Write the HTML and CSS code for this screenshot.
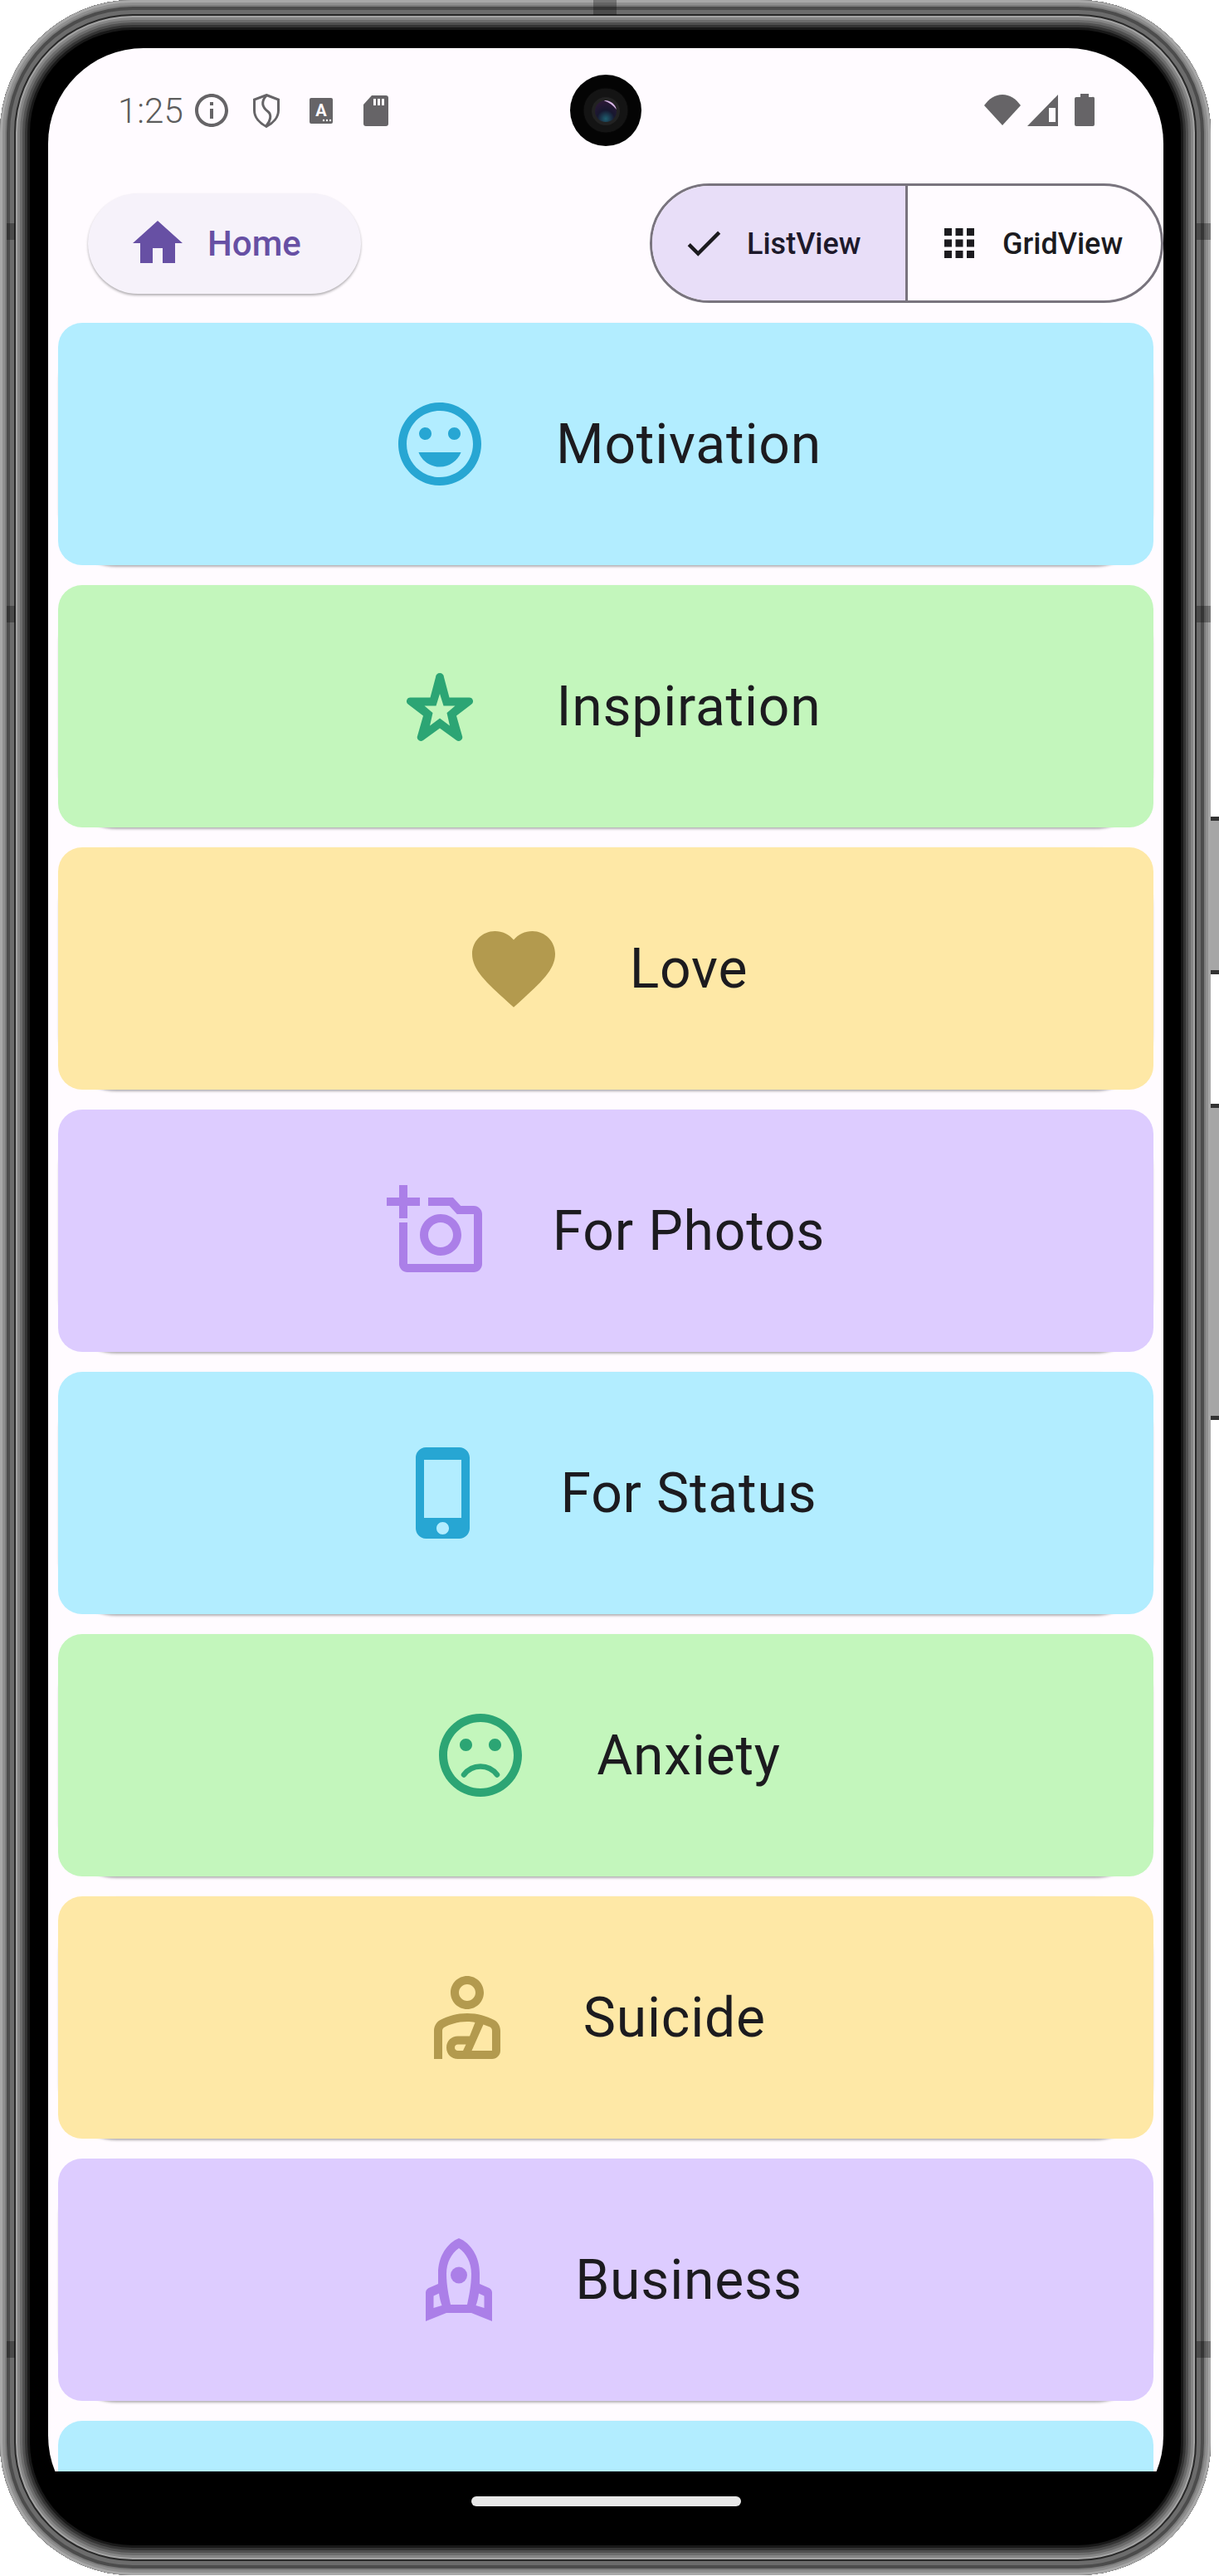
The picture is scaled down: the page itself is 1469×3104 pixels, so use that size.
FILE: index.html
```html
<!DOCTYPE html>
<html lang="en">
<head>
    <meta charset="UTF-8">
    <meta name="viewport" content="width=device-width, initial-scale=1.0">
    <title>Quotes</title>
    <link rel="stylesheet" href="styles.css">
</head>
<body>
    <div class="device">
        <div class="phone">
            <!-- antenna bands on the frame -->
            <div class="band band-left band-1"></div>
            <div class="band band-left band-2"></div>
            <div class="band band-left band-3"></div>
            <div class="band band-right band-1"></div>
            <div class="band band-right band-2"></div>
            <div class="band band-right band-3"></div>
            <div class="band band-top"></div>

            <div class="screen">
                <div class="content">
                    <!-- Status bar -->
                    <div class="status-bar">
                        <div class="status-left">
                            <span class="time">1:25</span>
                            <svg class="status-icon" viewBox="0 0 24 24"><path d="M11 7h2v2h-2zm0 4h2v6h-2zm1-9C6.48 2 2 6.48 2 12s4.48 10 10 10 10-4.48 10-10S17.52 2 12 2zm0 18c-4.41 0-8-3.59-8-8s3.59-8 8-8 8 3.59 8 8-3.59 8-8 8z"/></svg>
                            <svg class="status-icon" viewBox="0 0 48 48"><path class="status-line" d="M24 5.5 38.5 11v13C38.500 32.500 32 39.500 24 43.500 16 39.500 9.500 32.500 9.500 24V11Z"/><path class="status-line" d="M24 6C17 14 19 20 26 25.500 31 29.500 28.500 37.500 24 42.500"/></svg>
                            <svg class="status-icon" viewBox="0 0 48 48"><rect x="10" y="9" width="28" height="31" rx="2"/><text class="sim-letter" x="24" y="31" text-anchor="middle">A</text><circle class="sim-dot" cx="27" cy="36" r="1.200"/><circle class="sim-dot" cx="31" cy="36" r="1.200"/><circle class="sim-dot" cx="35" cy="36" r="1.200"/></svg>
                            <svg class="status-icon" viewBox="0 0 48 48"><path d="M19 6H36a3 3 0 0 1 3 3V40a3 3 0 0 1-3 3H12a3 3 0 0 1-3-3V17Z"/><rect class="sim-dot" x="21" y="10" width="3" height="8"/><rect class="sim-dot" x="26" y="10" width="3" height="8"/><rect class="sim-dot" x="31" y="10" width="3" height="8"/></svg>
                        </div>
                        <svg class="camera" viewBox="0 0 86 86">
                            <defs>
                                <radialGradient id="lens" cx="0.5" cy="0.85" r="0.8">
                                    <stop offset="0" stop-color="#1f5f70"/>
                                    <stop offset="0.5" stop-color="#17172f"/>
                                    <stop offset="1" stop-color="#2a1836"/>
                                </radialGradient>
                            </defs>
                            <circle cx="43" cy="43" r="43" fill="#040404"/>
                            <circle cx="43" cy="43" r="27" fill="#141414" stroke="#080808" stroke-width="1"/>
                            <circle cx="43" cy="44" r="17" fill="#222"/>
                            <circle cx="43" cy="44" r="13" fill="url(#lens)"/>
                            <path d="M41 31.200C48 30.400 55 36 55.800 42 52.500 37.500 47.500 33.500 41 31.200Z" fill="#d9b8e6"/>
                        </svg>
                        <div class="status-right">
                            <svg class="status-icon" viewBox="0 0 48 48"><path d="M2 18C8 10 15 5 24 5S40 10 46 18L24 42Z"/></svg>
                            <svg class="status-icon" viewBox="0 0 48 48"><path d="M43 5V43H6ZM32 21V38H40V21Z" fill-rule="evenodd"/></svg>
                            <svg class="status-icon battery" viewBox="0 0 48 48"><path d="M19 4H29V8H33A2 2 0 0 1 36 10V41A2 2 0 0 1 34 43H14A2 2 0 0 1 12 41V10A2 2 0 0 1 14 8H19Z"/></svg>
                        </div>
                    </div>

                    <!-- Header -->
                    <div class="header">
                        <button class="home-button">
                            <svg viewBox="0 0 24 24"><path d="M10 20v-6h4v6h5v-8h3L12 3 2 12h3v8z"/></svg>
                            <span>Home</span>
                        </button>
                        <div class="view-toggle">
                            <div class="segment selected">
                                <svg viewBox="0 0 24 24"><path d="M9 16.170 4.830 12l-1.420 1.410L9 19 21 7l-1.410-1.410z"/></svg>
                                <span>ListView</span>
                            </div>
                            <div class="segment">
                                <svg viewBox="0 0 24 24"><path d="M4 8h4V4H4v4zm6 12h4v-4h-4v4zm-6 0h4v-4H4v4zm0-6h4v-4H4v4zm6 0h4v-4h-4v4zm6-10v4h4V4h-4zm-6 4h4V4h-4v4zm6 6h4v-4h-4v4zm0 6h4v-4h-4v4z"/></svg>
                                <span>GridView</span>
                            </div>
                        </div>
                    </div>

                    <!-- Categories -->
                    <div class="card-list">
                        <div class="card blue">
                            <svg class="card-icon" viewBox="0 0 24 24"><path d="M11.990 2C6.470 2 2 6.480 2 12s4.470 10 9.990 10C17.520 22 22 17.520 22 12S17.520 2 11.990 2zM12 20c-4.420 0-8-3.580-8-8s3.580-8 8-8 8 3.580 8 8-3.580 8-8 8zm3.500-9c.830 0 1.500-.670 1.500-1.500S16.330 8 15.500 8 14 8.670 14 9.500s.670 1.500 1.500 1.500zm-7 0c.830 0 1.500-.670 1.500-1.500S9.330 8 8.500 8 7 8.670 7 9.500 7.670 11 8.500 11zm3.500 6.500c2.330 0 4.310-1.460 5.110-3.500H6.890c.800 2.040 2.780 3.500 5.110 3.500z"/></svg>
                            <span class="card-title">Motivation</span>
                        </div>
                        <div class="card green">
                            <svg class="card-icon" viewBox="0 0 24 24"><path fill-rule="evenodd" d="M11 5A1 1 0 0 1 13 5L14.300 9.900H19.100A.9.9 0 0 1 19.600 11.550L16 14.300 17.400 19.200A.9.9 0 0 1 16 20.200L12 17.300 8 20.200A.9.9 0 0 1 6.600 19.200L8 14.300 4.400 11.550A.9.9 0 0 1 4.900 9.900H9.700ZM12 9 11.100 11.900H8.300L10.300 13.600 9.600 16.700 12 14.900 14.400 16.700 13.700 13.600 15.700 11.900H12.900Z"/></svg>
                            <span class="card-title">Inspiration</span>
                        </div>
                        <div class="card yellow">
                            <svg class="card-icon" viewBox="0 0 24 24"><path d="M12 21.350l-1.450-1.320C5.400 15.360 2 12.280 2 8.500 2 5.420 4.420 3 7.500 3c1.740 0 3.410.810 4.500 2.090C13.090 3.810 14.760 3 16.500 3 19.580 3 22 5.420 22 8.500c0 3.780-3.400 6.860-8.550 11.540L12 21.350z"/></svg>
                            <span class="card-title">Love</span>
                        </div>
                        <div class="card purple">
                            <svg class="card-icon" viewBox="0 0 24 24"><path d="M21 6h-3.170L16 4h-6v2h5.120l1.830 2H21v12H5V10H3v10c0 1.100.900 2 2 2h16c1.100 0 2-.900 2-2V8c0-1.100-.900-2-2-2zM8 13c0 2.760 2.240 5 5 5s5-2.240 5-5-2.240-5-5-5-5 2.240-5 5zm5-3c1.650 0 3 1.350 3 3s-1.350 3-3 3-3-1.350-3-3 1.350-3 3-3zM5 6h3V4H5V1H3v3H0v2h3v3h2V6z"/></svg>
                            <span class="card-title">For Photos</span>
                        </div>
                        <div class="card blue">
                            <svg class="card-icon" viewBox="0 0 24 24"><path d="M15.500 1h-8C6.120 1 5 2.120 5 3.500v17C5 21.880 6.120 23 7.500 23h8c1.380 0 2.500-1.120 2.500-2.500v-17C18 2.120 16.880 1 15.500 1zm-4 21c-.830 0-1.500-.670-1.500-1.500s.670-1.500 1.500-1.500 1.500.670 1.500 1.500-.670 1.500-1.500 1.500zm4.500-4H7V4h9v14z"/></svg>
                            <span class="card-title">For Status</span>
                        </div>
                        <div class="card green">
                            <svg class="card-icon" viewBox="0 0 24 24"><path d="M15.500 11c.830 0 1.500-.670 1.500-1.500S16.330 8 15.500 8 14 8.670 14 9.500s.670 1.500 1.500 1.500zm-7 0c.830 0 1.500-.670 1.500-1.500S9.330 8 8.500 8 7 8.670 7 9.500 7.670 11 8.500 11zm3.490-9C6.470 2 2 6.480 2 12s4.470 10 9.990 10C17.520 22 22 17.520 22 12S17.520 2 11.990 2zM12 20c-4.420 0-8-3.580-8-8s3.580-8 8-8 8 3.580 8 8-3.580 8-8 8z"/><path class="mouth" d="M8 16.700C9 15.400 10.400 14.700 12 14.700S15 15.400 16 16.700"/></svg>
                            <span class="card-title">Anxiety</span>
                        </div>
                        <div class="card yellow">
                            <svg class="card-icon" viewBox="0 0 24 24"><path fill-rule="evenodd" d="M12 10c2.210 0 4-1.790 4-4s-1.790-4-4-4-4 1.790-4 4 1.790 4 4 4zm0-6c1.100 0 2 .900 2 2s-.900 2-2 2-2-.900-2-2 .900-2 2-2zM4 22V15.220c0-1.120.610-2.150 1.610-2.660C7.290 11.700 9.470 11 12 11s4.710.700 6.390 1.560c1 .510 1.610 1.540 1.610 2.660V20c0 1.100-.900 2-2 2H9.750C8.230 22 7 20.880 7 19.250S8.230 16.500 9.750 16.500H12.600L13.900 13.200C13.300 13.060 12.700 13 12 13c-2.370 0-4.290.730-5.480 1.340-.320.160-.520.500-.520.880V22ZM9.750 18.500H11.700L11 20H9.750C9.350 20 9 19.770 9 19.250S9.350 18.500 9.750 18.500ZM15.900 13.700 17.500 14.300C17.800 14.450 18 14.800 18 15.220V20H13.100Z"/></svg>
                            <span class="card-title">Suicide  </span>
                        </div>
                        <div class="card purple">
                            <svg class="card-icon" viewBox="0 0 24 24"><path fill-rule="evenodd" d="M12 2C14.800 3.100 17 6.400 17 10.400V13L19.300 14C19.700 14.200 20 14.600 20 15.100V22L15 20H9L4 22V15.100C4 14.600 4.300 14.200 4.700 14L7 13V10.400C7 6.400 9.200 3.100 12 2ZM12 4.400C10.200 5.600 9 7.900 9 10.600 9 13.300 9.600 16.100 10 18H14C14.400 16.100 15 13.300 15 10.600 15 7.900 13.800 5.600 12 4.400ZM5.900 15.900V18.800L7.900 18.200C7.600 17.400 7.300 16.200 7.200 15.300ZM18.100 15.900V18.800L16.100 18.200C16.400 17.400 16.700 16.200 16.800 15.300Z"/><circle cx="12" cy="10.900" r="2"/></svg>
                            <span class="card-title">Business</span>
                        </div>
                        <div class="card blue"></div>
                    </div>
                </div>
                <div class="nav-bar"><div class="nav-pill"></div></div>
            </div>
        </div>
        <div class="side-keys">
            <div class="key key-power"></div>
            <div class="key key-volume"></div>
        </div>
    </div>
</body>
</html>
```

FILE: styles.css
```css
body {
    margin: 0;
    background: #fff;
    font-family: Roboto, "Noto Sans", sans-serif;
}

.device {
    display: flex;
    width: 1469px;
    height: 3104px;
    overflow: hidden;
}

/* phone frame, rings go from the outside in */
.phone {
    position: relative;
    width: 1459px;
    height: 3103px;
    box-sizing: border-box;
    padding: 58px 57px 0 58px;
    background: #000;
    border-radius: 160px;
    box-shadow:
        inset 0 0 0 3px #a8a8a8,
        inset 0 0 0 6px #909090,
        inset 0 0 0 8px #7c7c7c,
        inset 0 0 0 12px #4c4c4c,
        inset 0 0 0 17px #6c6c6c,
        inset 0 0 0 19px #282828,
        inset 0 0 0 21px #a4a4a4,
        inset 0 0 0 24px #868686,
        inset 0 0 0 27px #6c6c6c,
        inset 0 0 0 30px #505050,
        inset 0 0 0 33px #343434,
        inset 0 0 0 36px #181818;
}

.band {
    position: absolute;
    background: rgba(0, 0, 0, 0.3);
}

.band-left {
    left: 8px;
    width: 10px;
    height: 20px;
}

.band-right {
    right: 0;
    width: 17px;
    height: 20px;
}

.band-1 { top: 269px; }
.band-2 { top: 730px; }
.band-3 { top: 2821px; }

.band-top {
    top: 0;
    left: 715px;
    width: 28px;
    height: 18px;
}

.side-keys {
    display: flex;
    flex-direction: column;
    gap: 156px;
    width: 10px;
    padding-top: 984px;
}

.key {
    background: #a6a6a6;
    border-top: 5px solid #333;
    border-bottom: 5px solid #333;
}

.key-power {
    height: 180px;
}

.key-volume {
    height: 371px;
}

.screen {
    height: 2992px;
    overflow: hidden;
    background: #000;
    border-radius: 115px;
}

.content {
    height: 2920px;
    overflow: hidden;
    background: #fffbff;
}

/* status bar */
.status-bar {
    display: grid;
    grid-template-columns: 1fr 86px 1fr;
    align-items: center;
    height: 150px;
}

.status-left {
    display: flex;
    align-items: center;
    gap: 18px;
    padding-left: 84px;
}

.status-right {
    display: flex;
    justify-content: flex-end;
    align-items: center;
    padding-right: 71px;
}

.time {
    margin-right: -8px;
    font-size: 42px;
    font-weight: 300;
    color: #5c5c5c;
}

.status-icon {
    width: 48px;
    height: 48px;
    fill: #666467;
}

.status-line {
    fill: none;
    stroke: #666467;
    stroke-width: 3;
}

.sim-letter {
    font-family: Roboto, sans-serif;
    font-size: 20px;
    font-weight: 700;
    fill: #fffbff;
}

.sim-dot {
    fill: #fffbff;
}

.battery {
    margin-left: 3px;
}

.camera {
    width: 86px;
    height: 86px;
}

/* header row */
.header {
    display: flex;
    justify-content: space-between;
    align-items: center;
    padding: 13px 0 24px 48px;
}

.home-button {
    display: flex;
    align-items: center;
    gap: 24px;
    height: 121px;
    padding: 0 72px 0 48px;
    border: none;
    border-radius: 61px;
    background: #f6f2fa;
    box-shadow: 0 2px 3px rgba(0, 0, 0, 0.3);
    color: #6750a4;
    font-family: inherit;
    font-size: 42px;
    font-weight: 500;
}

.home-button svg {
    width: 72px;
    height: 72px;
    fill: #6750a4;
}

.view-toggle {
    display: flex;
    width: 619px;
    height: 144px;
    box-sizing: border-box;
    overflow: hidden;
    border: 3px solid #79747e;
    border-radius: 72px;
}

.segment {
    display: flex;
    flex: 1;
    align-items: center;
    gap: 25px;
    padding-left: 35px;
    color: #1c1b1f;
    font-size: 36px;
    font-weight: 500;
}

.segment span {
    margin-top: 2px;
}

.segment svg {
    width: 54px;
    height: 54px;
    fill: #1c1b1f;
}

.segment.selected {
    border-right: 3px solid #79747e;
    background: #e8def8;
    color: #1d192b;
}

/* category cards */
.card-list {
    display: flex;
    flex-direction: column;
    gap: 24px;
    padding: 0 12px;
    isolation: isolate;
}

.card {
    position: relative;
    display: flex;
    flex: none;
    justify-content: center;
    align-items: center;
    gap: 80px;
    height: 292px;
    border-radius: 29px;
}

/* the shadow only shows where this rounder shape touches the card edge */
.card::before {
    content: "";
    position: absolute;
    inset: 0 1px;
    z-index: -1;
    border-radius: 70px;
    box-shadow: 0 2px 3px rgba(0, 0, 0, 0.3);
}

.card-icon {
    width: 120px;
    height: 120px;
}

.card-title {
    color: #1c1b1f;
    font-size: 66px;
    letter-spacing: 0.8px;
    white-space: pre;
}

.mouth {
    fill: none;
    stroke-width: 1.3;
    stroke-linecap: round;
}

.blue { background: #b2edff; }
.blue .card-icon { fill: #27a6d3; }

.green { background: #c3f6bc; }
.green .card-icon { fill: #2ca574; }
.green .mouth { stroke: #2ca574; }

.yellow { background: #fee8a6; }
.yellow .card-icon { fill: #b39a4e; }

.purple { background: #ddccff; }
.purple .card-icon { fill: #ab7fe8; }

/* gesture bar */
.nav-bar {
    display: flex;
    justify-content: center;
    padding-top: 30px;
}

.nav-pill {
    width: 325px;
    height: 12px;
    border-radius: 6px;
    background: #e8e8e8;
}
```
